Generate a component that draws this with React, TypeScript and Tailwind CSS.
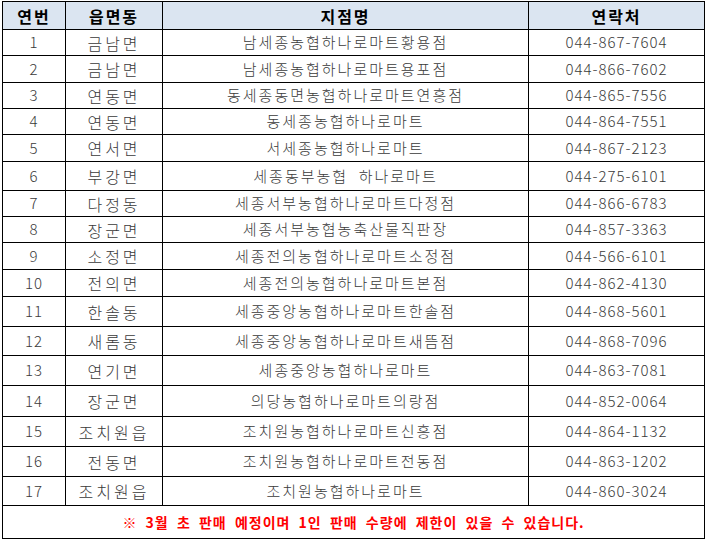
const rows: [string, string, string][] = [
  ['금남면', '남세종농협하나로마트황용점', '044-867-7604'],
  ['금남면', '남세종농협하나로마트용포점', '044-866-7602'],
  ['연동면', '동세종동면농협하나로마트연흥점', '044-865-7556'],
  ['연동면', '동세종농협하나로마트', '044-864-7551'],
  ['연서면', '서세종농협하나로마트', '044-867-2123'],
  ['부강면', '세종동부농협  하나로마트', '044-275-6101'],
  ['다정동', '세종서부농협하나로마트다정점', '044-866-6783'],
  ['장군면', '세종서부농협농축산물직판장', '044-857-3363'],
  ['소정면', '세종전의농협하나로마트소정점', '044-566-6101'],
  ['전의면', '세종전의농협하나로마트본점', '044-862-4130'],
  ['한솔동', '세종중앙농협하나로마트한솔점', '044-868-5601'],
  ['새롬동', '세종중앙농협하나로마트새뜸점', '044-868-7096'],
  ['연기면', '세종중앙농협하나로마트', '044-863-7081'],
  ['장군면', '의당농협하나로마트의랑점', '044-852-0064'],
  ['조치원읍', '조치원농협하나로마트신흥점', '044-864-1132'],
  ['전동면', '조치원농협하나로마트전동점', '044-863-1202'],
  ['조치원읍', '조치원농협하나로마트', '044-860-3024']
];

// row heights measured off the sheet, they drift a little toward the bottom
const heights = [26, 27, 26, 26, 27, 29, 26, 26, 27, 27, 30, 29, 30, 31, 30, 30, 29];

const cell = 'border border-black text-center p-0';

export default function App() {
  return (
    <div className="bg-white w-[706px] h-[539px] pl-[2px] pt-[1px] font-['Noto_Sans_CJK_KR',sans-serif]">
      <table className="border-collapse table-fixed w-[702px]">
        <colgroup>
          <col className="w-[63px]" />
          <col className="w-[97px]" />
          <col className="w-[366px]" />
          <col className="w-[176px]" />
        </colgroup>
        <thead>
          <tr className="h-[28px] bg-[#dbe5f1] text-[16px] font-bold text-black tracking-[2px]">
            <th className={cell}>연번</th>
            <th className={cell}>읍면동</th>
            <th className={cell}>지점명</th>
            <th className={cell}>연락처</th>
          </tr>
        </thead>
        <tbody className="text-[15px] font-light text-[#3a3a3a] tracking-[1px]">
          {rows.map(([dong, name, tel], i) => (
            <tr key={i} style={{ height: heights[i] }}>
              <td className={cell}>{i + 1}</td>
              <td className={`${cell} text-[16px] tracking-[3px]`}>{dong}</td>
              <td className={`${cell} whitespace-pre tracking-[2px]`}>{name}</td>
              <td className={cell}>{tel}</td>
            </tr>
          ))}
          <tr className="h-[33px]">
            <td colSpan={4} className={`${cell} text-[#ff0000] font-bold text-[14px] tracking-[1px] [word-spacing:4px]`}>
              ※ 3월 초 판매 예정이며 1인 판매 수량에 제한이 있을 수 있습니다.
            </td>
          </tr>
        </tbody>
      </table>
    </div>
  );
}
